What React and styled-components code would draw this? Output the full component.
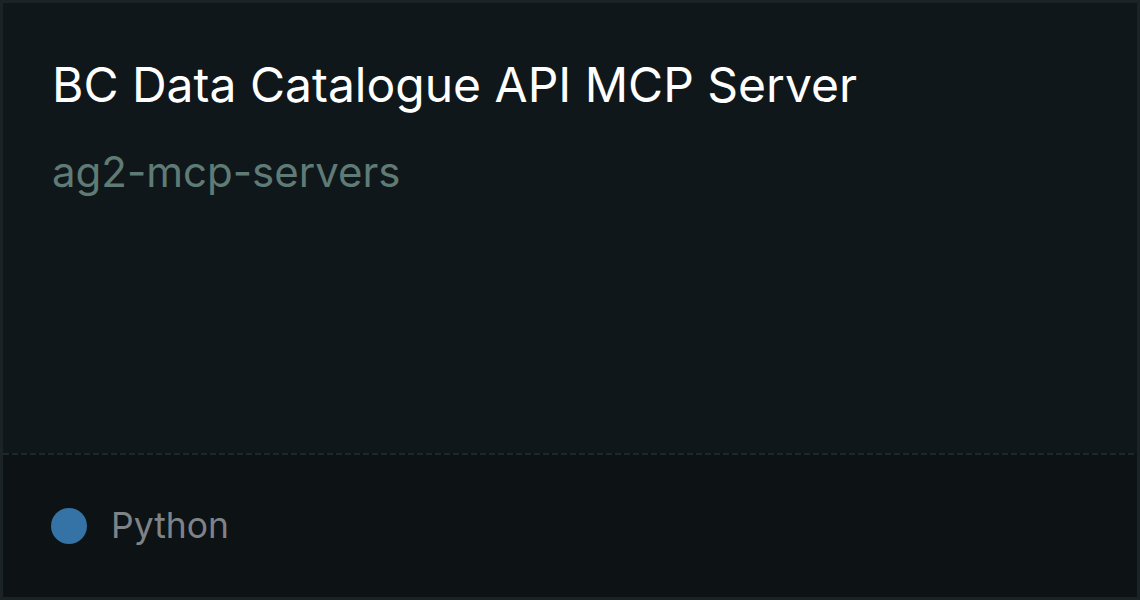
import styled, { createGlobalStyle } from 'styled-components';

const GlobalStyle = createGlobalStyle`
    html, body {
        margin: 0;
        padding: 0;
        background: #1c2326;
    }
    * {
        box-sizing: border-box;
    }
`;

const Card = styled.div`
    width: 1140px;
    height: 600px;
    border: 3px solid #1c2326;
    display: flex;
    flex-direction: column;
    font-family: Inter, "Noto Sans", sans-serif;
    overflow: hidden;
`;

const Body = styled.div`
    flex: 1;
    background: #10171a;
    padding: 53px 49px 0;
    display: flex;
    flex-direction: column;
`;

const Title = styled.h1`
    margin: 0;
    font-size: 48px;
    font-weight: 400;
    line-height: 58px;
    color: #ffffff;
`;

const Owner = styled.div`
    margin-top: 32px;
    font-size: 42px;
    line-height: 51px;
    color: #5f7b75;
`;

const Divider = styled.div`
    height: 2px;
    flex-shrink: 0;
    background-color: #0d1215;
    background-image: repeating-linear-gradient(
        to right,
        #1f272a 0,
        #1f272a 6px,
        transparent 6px,
        transparent 9px
    );
`;

const Footer = styled.div`
    height: 142px;
    flex-shrink: 0;
    background: #0d1215;
    padding: 0 48px;
    display: flex;
    align-items: center;
    gap: 24px;
`;

const LangDot = styled.span`
    width: 36px;
    height: 36px;
    border-radius: 50%;
    background: ${({ $color }) => $color};
    flex-shrink: 0;
`;

const LangName = styled.span`
    font-size: 35.5px;
    line-height: 44px;
    color: #7d8386;
`;

const App = () => (
    <>
        <GlobalStyle />
        <Card>
            <Body>
                <Title>BC Data Catalogue API MCP Server</Title>
                <Owner>ag2-mcp-servers</Owner>
            </Body>
            <Divider />
            <Footer>
                <LangDot $color="#3572a5" />
                <LangName>Python</LangName>
            </Footer>
        </Card>
    </>
);

export default App;
